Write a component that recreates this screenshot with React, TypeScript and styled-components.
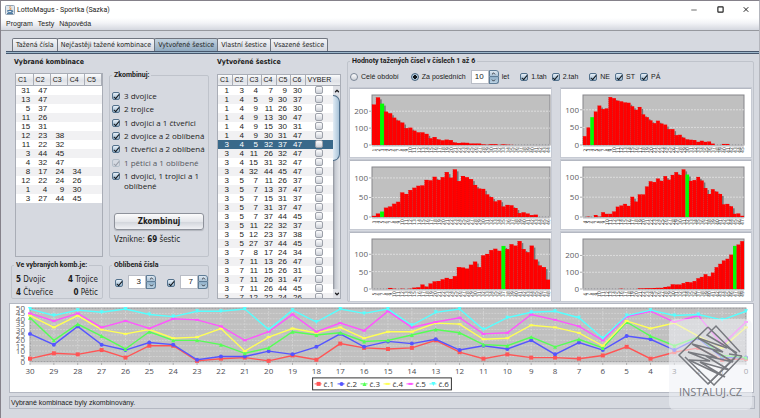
import React from "react";
import styled, { createGlobalStyle, css } from "styled-components";
import { ChevronUp, ChevronDown, Minus, Square, X } from "lucide-react";

const ui = `"DejaVu Sans Condensed", "DejaVu Sans", sans-serif`;
const plain = `"Liberation Sans", Arial, sans-serif`;
const narrow = `Roboto, "Liberation Sans", sans-serif`;
const body = `"Open Sans", "Noto Sans", sans-serif`;

const GlobalStyle = createGlobalStyle`
  *, *::before, *::after { box-sizing: border-box; }
  body { margin: 0; background: #d6d9e0; }
  button, input { font: inherit; color: inherit; margin: 0; padding: 0; }
`;

const Window = styled.div`
  position: relative;
  display: flex;
  flex-direction: column;
  min-height: 100vh;
  background: #d6d9e0;
  border: 1px solid #85818a;
  border-right-color: #b4b6bd;
  color: #1c1c20;
  font: 8px/10px ${ui};
`;

const TitleBar = styled.header`
  display: flex;
  align-items: center;
  gap: 2px;
  height: 17px;
  padding: 0 9px 0 4px;
  background: #fff;
  font: 7px/10px ${narrow};
`;

const TitleText = styled.span`
  flex: 1;
`;

const CaptionButton = styled.button`
  display: flex;
  align-items: center;
  justify-content: center;
  width: 8px;
  height: 10px;
  margin-left: 16px;
  border: 0;
  background: none;
  color: #222;
`;

const MenuBar = styled.nav`
  display: flex;
  align-items: center;
  gap: 5px;
  height: 13px;
  padding: 0 5px;
  background: linear-gradient(#fff, #f3f4f7 40%, #d4d7df);
  border-bottom: 1px solid #96989e;
  font: 7px/10px ${plain};
`;

const MenuItem = styled.button`
  border: 0;
  background: none;
  line-height: 10px;
`;

const TabStrip = styled.div`
  display: flex;
  height: 20px;
  padding: 7px 11px 0;
`;

const Tab = styled.button<{ $active?: boolean }>`
  height: 13px;
  margin-right: -1px;
  padding: 0 3px;
  border: 1px solid #70757f;
  border-bottom: 0;
  border-radius: 2px 2px 0 0;
  background: ${(p) =>
    p.$active
      ? "linear-gradient(#c3d2df, #8fa9c0)"
      : "linear-gradient(#f4f5f8, #d4d7df)"};
  font: 7px/10px ${ui};
  white-space: nowrap;
`;

const TabRule = styled.div`
  height: 3px;
  margin-left: 5px;
  background: #9db7cb;
  border-top: 1px solid #46566c;
  border-bottom: 1px solid #46566c;
`;

const Body = styled.main`
  display: grid;
  grid-template-columns: 198px 124px minmax(0, 1fr);
  padding: 3px 5px 0 10px;
`;

const Left = styled.section`
  display: grid;
  grid-template-columns: 92px 100px;
  grid-template-rows: 10px 186px 38px;
  column-gap: 6px;
  row-gap: 4px;
`;

const Heading = styled.h2`
  margin: 0;
  font: bold 7px/10px ${ui};
  white-space: nowrap;
`;

const LeftHeading = styled(Heading)`
  grid-column: 1 / 3;
  padding-left: 3px;
`;

const PickedPane = styled.div`
  margin: 2px 0 0 4px;
  border: 1px solid #a9adb6;
`;

const NumberTable = styled.table`
  width: 100%;
  border-collapse: collapse;
  table-layout: fixed;
  font: 8px/9px ${plain};

  th {
    height: 11px;
    padding: 0 0 0 2px;
    background: linear-gradient(#fafbfc, #dfe1e6 60%, #eceef1);
    border-right: 1px solid #a9adb6;
    border-bottom: 1px solid #a9adb6;
    font-size: 7px;
    font-weight: normal;
    text-align: left;
  }
  td {
    height: 9px;
    padding: 0 3px 0 0;
    text-align: right;
  }
`;

const Row = styled.tr<{ $selected?: boolean }>`
  background: #fff;
  &:nth-child(even) { background: #f1f1f3; }
  ${(p) =>
    p.$selected &&
    css`
      background: #39698a;
      color: #fff;
    `}
`;

const Group = styled.fieldset`
  min-width: 0;
  margin: 0;
  padding: 0 4px;
  border: 1px solid #bfc3cb;
  border-radius: 2px;
`;

const Legend = styled.legend`
  margin-left: -2px;
  padding: 0 2px;
  font: bold 7px/9px ${narrow};
  white-space: nowrap;
`;

const OptionList = styled.div`
  display: flex;
  flex-direction: column;
  justify-content: space-between;
  height: 100px;
  margin-top: 11px;
`;

const Option = styled.label<{ $dim?: boolean }>`
  display: flex;
  gap: 4px;
  margin: 0 -3px 0 -2px;
  font: 8px/10px ${body};
  color: ${(p) => (p.$dim ? "#55585f" : "inherit")};
`;

const Check = styled.input.attrs({ type: "checkbox" })`
  appearance: none;
  display: inline-flex;
  align-items: center;
  justify-content: center;
  flex: none;
  width: 8px;
  height: 8px;
  margin-top: 1px;
  border: 1px solid #7c8797;
  border-radius: 2px;
  background: linear-gradient(#fdfdfe, #cdd1d8);

  &:checked {
    border-color: #53718c;
    background: linear-gradient(#e6eff7, #96b4cd);
  }
  &:checked::before {
    content: "";
    width: 3px;
    height: 6px;
    border: solid #101418;
    border-width: 0 1px 1px 0;
    transform: rotate(40deg);
  }
  &:disabled { border-color: #b4bfca; background: #d5dae2; }
  &:disabled::before { border-color: #9a9ea8; }
`;

const Radio = styled.input.attrs({ type: "radio" })`
  appearance: none;
  width: 8px;
  height: 8px;
  border: 1px solid #7c8797;
  border-radius: 50%;
  background: linear-gradient(#fdfdfe, #cdd1d8);
  &:checked {
    border-color: #45627c;
    background: radial-gradient(#101418 0 2px, #b5cbdd 2px);
  }
`;

const CombineButton = styled.button`
  display: block;
  width: 100%;
  height: 17px;
  margin-top: 22px;
  border: 1px solid #8e929b;
  border-radius: 3px;
  background: linear-gradient(#fbfbfc, #e4e6ea 50%, #d3d6dc 55%, #f0f1f4);
  box-shadow: 0 1px 1px #b2b5bd;
  font: bold 8px/12px ${ui};
`;

const Result = styled.p`
  margin: 5px 0 0;
`;

const Tally = styled.div`
  display: flex;
  justify-content: space-between;
  margin-bottom: 3px;
`;

const TallyGroup = styled(Group)`
  padding-top: 5px;
`;

const FavouriteRow = styled.div`
  display: flex;
  align-items: center;
  justify-content: space-between;
  margin-right: -4px;
  padding: 5px 0 0 1px;
`;

const Inline = styled.label`
  display: flex;
  align-items: center;
  gap: 5px;
  white-space: nowrap;
`;

const SpinBox = styled.span`
  display: grid;
  grid-template: 1fr 1fr / 18px 10px;
  width: 28px;
  height: 14px;
`;

const SpinInput = styled.input`
  grid-row: 1 / 3;
  width: 18px;
  min-width: 0;
  padding-right: 4px;
  border: 1px solid #b9bdc6;
  background: #fff;
  text-align: right;
  font: 8px/10px ${plain};
`;

const SpinButton = styled.button`
  display: flex;
  align-items: center;
  justify-content: center;
  border: 1px solid #5f7d97;
  border-radius: 0 3px 0 0;
  background: linear-gradient(#dfe9f2, #a9c1d5);
  & + & {
    border-top: 0;
    border-radius: 0 0 3px 0;
    background: linear-gradient(#8fafc8, #bcd2e3);
  }
`;

const Middle = styled.section`
  margin-left: 8px;
  margin-right: -8px;
`;

const ScrollPane = styled.div`
  display: flex;
  height: 225px;
  margin-top: 7px;
  border: 1px solid #a9adb6;
  overflow: hidden;
  background: #fff;
`;

const TicketTable = styled(NumberTable)`
  flex: none;
  width: 115px;
  align-self: flex-start;

  th { height: 10px; white-space: nowrap; }
  th:last-child { border-right: 0; }
  td:last-child { padding: 0; text-align: center; line-height: 0; }
`;

const RowCheck = styled(Check)`
  margin: 0;
  border-color: #9da1aa;
`;

const ScrollColumn = styled.div`
  flex: 1;
  display: flex;
  flex-direction: column;
  background: linear-gradient(90deg, #8b8f98, #c6cad2 30%, #e4e6ea);
`;

const ScrollHead = styled.div`
  height: 11px;
  background: linear-gradient(#fafbfc, #dfe1e6 60%, #eceef1);
  border-bottom: 1px solid #a9adb6;
`;

const ScrollArrow = styled.button`
  display: flex;
  align-items: center;
  justify-content: center;
  height: 9px;
  border: 0;
  background: #dfe1e6;
`;

const ScrollThumb = styled.div`
  height: 66px;
  border: 1px solid #4f6f8c;
  border-left: 0;
  border-radius: 0 7px 7px 0;
  background: linear-gradient(90deg, #e1ecf5, #a9c3d8);
`;

const ScrollTrack = styled.div`
  flex: 1;
`;

const ChartGroup = styled(Group)`
  margin-left: 14px;
  padding: 0 2px;

  ${Legend} { margin-left: 0; }
`;

const Filters = styled.div`
  display: flex;
  align-items: center;
  height: 16px;
  margin: 3px 0 3px 0;
  font: 7px/10px ${plain};
  ${Check} { margin-top: 0; }
`;

const Filter = styled(Inline)<{ $gap?: number }>`
  gap: 3px;
  margin-right: ${(p) => p.$gap ?? 5}px;
`;

const ChartGrid = styled.div`
  display: grid;
  grid-template-columns: 201fr 190fr;
  column-gap: 10px;
  row-gap: 3px;
`;

const ChartPanel = styled.div`
  height: 69px;
  background: #fff;
  border-top: 1px solid #b4b8c2;
  box-shadow: 0 0 0 1px #c6cad3;
  overflow: hidden;
`;

const Drawing = styled.svg`
  display: block;
  width: 100%;
  height: auto;
`;

const TrendPanel = styled.section`
  margin: 1px 5px 0 8px;
  background: #fff;
  border: 1px solid #b4b8c2;
`;

const StatusBar = styled.footer`
  margin: 3px 4px 9px 8px;
  padding: 0 1px;
  border: 1px solid #b4b8c2;
  font: 7px/11px ${plain};
`;

const Watermark = styled.div`
  position: absolute;
  right: 7px;
  bottom: 8px;
  display: flex;
  flex-direction: column;
  align-items: center;
  width: 83px;
  height: 91px;
  padding-top: 5px;
  border-radius: 6px;
  background: rgba(238, 240, 246, 0.55);
  color: #77797f;
  font: 11px/12px "Open Sans", sans-serif;
`;

const picked = [
  [31, 47], [13, 47], [5, 37], [11, 26], [15, 31], [12, 23, 38], [11, 22, 32],
  [3, 44, 45], [4, 32, 47], [8, 17, 24, 34], [12, 22, 24, 26], [1, 4, 9, 30],
  [3, 27, 44, 45],
];

const tickets = [
  [1, 3, 4, 7, 9, 30], [1, 4, 5, 9, 30, 37], [1, 4, 9, 11, 26, 30],
  [1, 4, 9, 13, 30, 47], [1, 4, 9, 15, 30, 31], [1, 4, 9, 30, 31, 47],
  [3, 4, 5, 32, 37, 47], [3, 4, 11, 26, 32, 47], [3, 4, 15, 31, 32, 47],
  [3, 4, 32, 44, 45, 47], [3, 5, 7, 11, 26, 37], [3, 5, 7, 13, 37, 47],
  [3, 5, 7, 15, 31, 37], [3, 5, 7, 31, 37, 47], [3, 5, 7, 37, 44, 45],
  [3, 5, 11, 22, 32, 37], [3, 5, 12, 23, 37, 38], [3, 5, 27, 37, 44, 45],
  [3, 7, 8, 17, 24, 34], [3, 7, 11, 13, 26, 47], [3, 7, 11, 15, 26, 31],
  [3, 7, 11, 26, 31, 47], [3, 7, 11, 26, 44, 45], [3, 7, 12, 22, 24, 26],
];

type Histogram = { values: number[]; hit: number; max: number; step: number };

const histograms: Histogram[] = [
  { hit: 2, max: 296, step: 100, values: [240, 282, 245, 198, 188, 162, 145, 133, 100, 103, 85, 75, 75, 66, 40, 47, 33, 28, 32, 29, 15, 12, 14, 13, 9, 9, 9, 4, 2, 5, 5, 1, 4, 2, 1, 0, 0, 0, 0, 0, 0, 0, 0, 0] },
  { hit: 2, max: 142, step: 50, values: [25, 50, 79, 95, 112, 102, 104, 136, 133, 126, 124, 121, 120, 110, 100, 108, 87, 79, 70, 62, 69, 61, 58, 45, 45, 28, 29, 21, 16, 15, 14, 9, 12, 9, 10, 4, 0, 0, 3, 3, 0, 0, 0, 0] },
  { hit: 2, max: 128, step: 50, values: [3, 9, 14, 24, 27, 34, 39, 63, 59, 69, 75, 80, 81, 95, 94, 103, 95, 102, 115, 101, 122, 92, 105, 102, 97, 82, 73, 72, 58, 51, 40, 43, 27, 31, 30, 23, 10, 12, 9, 5, 6, 0, 0, 0] },
  { hit: 28, max: 126, step: 50, values: [0, 1, 0, 5, 1, 12, 8, 8, 14, 26, 29, 33, 28, 51, 39, 57, 57, 77, 90, 88, 97, 91, 103, 94, 106, 113, 106, 120, 107, 91, 93, 101, 92, 73, 58, 70, 64, 58, 32, 33, 27, 8, 9, 3] },
  { hit: 32, max: 144, step: 50, values: [0, 0, 0, 0, 3, 1, 0, 1, 0, 1, 4, 5, 13, 7, 16, 22, 23, 28, 32, 29, 37, 63, 62, 59, 70, 79, 63, 97, 101, 112, 116, 110, 124, 115, 129, 125, 138, 115, 106, 125, 85, 68, 63, 27] },
  { hit: 41, max: 298, step: 100, values: [0, 0, 0, 0, 0, 0, 0, 0, 0, 0, 2, 0, 0, 0, 0, 4, 4, 5, 5, 6, 7, 7, 12, 15, 28, 27, 27, 35, 42, 40, 47, 64, 72, 88, 76, 98, 130, 150, 170, 180, 205, 257, 265, 285] },
];

function HistogramChart({ data, index }: { data: Histogram; index: number }) {
  const wide = index % 2 === 0;
  const width = wide ? 201 : 190;
  const x0 = 22;
  const plotW = wide ? 178 : 161;
  const y0 = 6;
  const plotH = 50;
  const base = y0 + plotH;
  const bw = plotW / data.values.length;
  const h = (v: number) => (v / data.max) * plotH;
  const ticks: number[] = [];
  for (let t = 0; t < data.max; t += data.step) ticks.push(t);
  return (
    <ChartPanel>
      <Drawing viewBox={`0 0 ${width} 68`} role="img" aria-label={`Četnost čísla č.${index + 1}`}>
        <rect x={x0} y={y0} width={plotW} height={plotH} fill="#c0c0c0" stroke="#85858a" />
        {ticks.map((t) => (
          <g key={t}>
            <line x1={x0} x2={x0 + plotW} y1={base - h(t)} y2={base - h(t)} stroke="#e8e8e8" strokeWidth="0.7" strokeDasharray="2 1" />
            <line x1={x0 - 3} x2={x0 - 1} y1={base - h(t)} y2={base - h(t)} stroke="#888" strokeWidth="0.7" />
            <text x={x0 - 4} y={base - h(t) + 3} textAnchor="end" fontSize="8" fill="#5c5c62" fontFamily={body}>{t}</text>
          </g>
        ))}
        {data.values.map((v, i) =>
          v > 10 && i < data.values.length - 1 ? (
            <rect key={i} x={x0 + (i + 1) * bw} y={base - h(v) + 2} width="1.6" height={Math.max(0, h(v) - 2)} fill="#757575" />
          ) : null
        )}
        {data.values.map((v, i) => (
          <g key={i}>
            <rect x={x0 + i * bw} y={base - h(v)} width={bw} height={h(v)} fill={i === data.hit ? "#00ff00" : "#ff0000"} />
            {i !== data.hit && v > 0 && (
              <line x1={x0 + i * bw} x2={x0 + i * bw} y1={base - h(v)} y2={base} stroke="#b80f0f" strokeWidth="0.4" strokeDasharray="1 1" />
            )}
            <text transform={`translate(${x0 + (i + 0.5) * bw + 2} ${base + 8}) rotate(-90)`} textAnchor="middle" x="3" fontSize="5" fill="#3c3c40" fontFamily={ui}>
              {i + index + 1}
            </text>
          </g>
        ))}
        <line x1={x0} x2={x0 + plotW} y1={base + 1} y2={base + 1} stroke="#99999d" strokeWidth="0.7" />
      </Drawing>
    </ChartPanel>
  );
}

type Shape = "square" | "circle" | "up" | "down" | "diamond" | "bar";
type Series = { name: string; color: string; shape: Shape; values: number[] };

const series: Series[] = [
  { name: "č.1", color: "#ff5555", shape: "square", values: [3, 8, 7, 11, 4, 15, 15, 1, 3, 4, 1, 6, 2, 17, 13, 12, 13, 20, 9, 3, 7, 4, 4, 3, 6, 14, 3, 9, 13, 2, 3] },
  { name: "č.2", color: "#5555ff", shape: "circle", values: [26, 16, 33, 16, 11, 18, 16, 2, 5, 5, 10, 7, 14, 26, 14, 19, 17, 21, 11, 15, 12, 20, 7, 18, 11, 24, 21, 11, 22, 4, 4] },
  { name: "č.3", color: "#55ff55", shape: "up", values: [41, 20, 35, 24, 12, 28, 20, 20, 16, 8, 13, 28, 25, 27, 19, 20, 25, 30, 27, 16, 15, 23, 14, 21, 13, 37, 24, 15, 23, 6, 4] },
  { name: "č.4", color: "#ffff55", shape: "diamond", values: [43, 32, 43, 30, 26, 30, 22, 23, 31, 10, 23, 31, 27, 32, 22, 28, 28, 36, 35, 21, 22, 34, 32, 27, 15, 38, 31, 36, 24, 13, 32] },
  { name: "č.5", color: "#ff55ff", shape: "bar", values: [45, 38, 45, 32, 38, 31, 40, 39, 33, 20, 28, 44, 28, 36, 29, 47, 32, 37, 41, 26, 27, 44, 39, 33, 20, 42, 47, 37, 43, 16, 37] },
  { name: "č.6", color: "#55ffff", shape: "down", values: [49, 43, 48, 46, 49, 44, 42, 47, 47, 49, 30, 48, 37, 49, 45, 49, 34, 46, 49, 30, 41, 46, 47, 41, 22, 43, 48, 43, 44, 39, 47] },
];

function Marker({ x, y, shape, color }: { x: number; y: number; shape: Shape; color: string }) {
  const d: Record<Shape, string> = {
    square: "M-2-2H2V2H-2Z",
    circle: "M-2 0A2 2 0 1 0 2 0A2 2 0 1 0-2 0Z",
    up: "M0-2L2 2H-2Z",
    down: "M0 2L2-2H-2Z",
    diamond: "M-2-1H2V1H-2Z",
    bar: "M-2-1H2V1H-2Z",
  };
  return <path d={d[shape]} transform={`translate(${x} ${y})`} fill={color} />;
}

function TrendChart() {
  const x0 = 20;
  const w = 717;
  const y0 = 4;
  const h = 54;
  const px = (i: number) => x0 + (i * w) / 30;
  const py = (v: number) => y0 + h - (v * h) / 50;
  return (
    <TrendPanel>
      <Drawing viewBox="0 0 744 88" role="img" aria-label="Vývoj tažených čísel">
        <rect x={x0} y={y0} width={w} height={h} fill="#c0c0c0" stroke="#77777b" strokeWidth="0.8" />
        {Array.from({ length: 11 }, (_, i) => i * 5).map((v) => (
          <g key={v}>
            <line x1={x0} x2={x0 + w} y1={py(v)} y2={py(v)} stroke="#dcdcdc" strokeWidth="0.6" strokeDasharray="2 1" />
            <text x={x0 - 5} y={py(v) + 3} textAnchor="end" fontSize="8" fill="#5c5c62" fontFamily={body}>{v}</text>
          </g>
        ))}
        {Array.from({ length: 31 }, (_, i) => (
          <g key={i}>
            <line x1={px(i)} x2={px(i)} y1={y0} y2={y0 + h} stroke="#dcdcdc" strokeWidth="0.6" strokeDasharray="2 1" />
            <line x1={px(i)} x2={px(i)} y1={y0 + h + 1} y2={y0 + h + 3} stroke="#888" strokeWidth="0.7" />
            <text x={px(i)} y={y0 + h + 12} textAnchor="middle" fontSize="8" fill="#4c4c52" fontFamily={body}>{30 - i}</text>
          </g>
        ))}
        <line x1={x0} x2={x0 + w} y1={y0 + h + 2} y2={y0 + h + 2} stroke="#aaa" strokeWidth="0.7" />
        {series.map((s) => (
          <g key={s.name}>
            <polyline points={s.values.map((v, i) => `${px(i)},${py(v)}`).join(" ")} fill="none" stroke={s.color} strokeWidth="1.4" />
            {s.values.map((v, i) => <Marker key={i} x={px(i)} y={py(v)} shape={s.shape} color={s.color} />)}
          </g>
        ))}
        <rect x="303" y="74" width="139" height="12" fill="#fff" stroke="#333" />
        {series.map((s, i) => (
          <g key={s.name}>
            <line x1={305 + i * 23} x2={312 + i * 23} y1="80" y2="80" stroke={s.color} />
            <Marker x={309 + i * 23} y={80} shape={s.shape} color={s.color} />
            <text x={314 + i * 23} y="83" fontSize="8" fill="#333" fontFamily={body}>{s.name}</text>
          </g>
        ))}
      </Drawing>
    </TrendPanel>
  );
}

function Spinner({ value, label }: { value: number; label: string }) {
  return (
    <SpinBox>
      <SpinInput defaultValue={value} aria-label={label} />
      <SpinButton aria-label="Zvýšit"><ChevronUp size={5} strokeWidth={4} /></SpinButton>
      <SpinButton aria-label="Snížit"><ChevronDown size={5} strokeWidth={4} /></SpinButton>
    </SpinBox>
  );
}

function JavaIcon() {
  return (
    <svg width="10" height="10" viewBox="0 0 10 10" aria-hidden="true">
      <rect x=".5" y=".5" width="9" height="9" rx="1" fill="#dfe7ee" stroke="#94a3b3" />
      <path d="M5.4 1C3.7 2.6 6.2 3 4.7 5M6.3 2.8C5.3 3.6 6.2 4 5.6 5" fill="none" stroke="#e08a3c" strokeWidth=".9" />
      <path d="M2.6 5.5H6.8V7.6H3.2ZM6.8 5.8H7.8V6.8H6.8M2 8.5H8" fill="none" stroke="#3f6f9a" strokeWidth=".9" />
    </svg>
  );
}

function InstalujLogo() {
  return (
    <svg width="68" height="62" viewBox="0 0 68 62" fill="none" stroke="#787a80" strokeWidth="1.5" aria-hidden="true">
      <path d="M63 28L39 2L30 11L60 29" />
      <path d="M31 3L2 31L31 60L60 31" />
      <path d="M31 3L60 31M65 32L37 61L8 33M65 32L52 30" />
      <path d="M21 14L46 28L15 20L40 34L11 28L33 37L12 36L48 53L23 38L52 46L29 32L56 38L36 26" strokeWidth="1.7" />
      <path d="M21 14L50 24M31 60L58 34" />
    </svg>
  );
}

const options = [
  "3 dvojice", "2 trojice", "1 dvojici a 1 čtveřici", "2 dvojice a 2 oblíbená",
  "1 čtveřici a 2 oblíbená", "1 pětici a 1 oblíbené", "1 dvojici, 1 trojici a 1 oblíbené",
];

const tabs = ["Tažená čísla", "Nejčastěji tažené kombinace", "Vytvořené šestice", "Vlastní šestice", "Vsazené šestice"];

export default function App() {
  return (
    <Window>
      <GlobalStyle />
      <TitleBar>
        <JavaIcon />
        <TitleText>LottoMagus - Sportka (Sazka)</TitleText>
        <CaptionButton aria-label="Minimalizovat"><Minus size={8} /></CaptionButton>
        <CaptionButton aria-label="Maximalizovat"><Square size={7} strokeWidth={4} /></CaptionButton>
        <CaptionButton aria-label="Zavřít"><X size={9} strokeWidth={3} /></CaptionButton>
      </TitleBar>
      <MenuBar>
        <MenuItem>Program</MenuItem>
        <MenuItem>Testy</MenuItem>
        <MenuItem>Nápověda</MenuItem>
      </MenuBar>
      <TabStrip role="tablist">
        {tabs.map((t, i) => (
          <Tab key={t} role="tab" aria-selected={i === 2} $active={i === 2}>{t}</Tab>
        ))}
      </TabStrip>
      <TabRule />
      <Body>
        <Left>
          <LeftHeading>Vybrané kombinace</LeftHeading>
          <PickedPane>
            <NumberTable>
              <thead>
                <tr>{[1, 2, 3, 4, 5].map((n) => <th key={n}>C{n}</th>)}</tr>
              </thead>
              <tbody>
                {picked.map((r, i) => (
                  <Row key={i}>{[0, 1, 2, 3, 4].map((c) => <td key={c}>{r[c]}</td>)}</Row>
                ))}
              </tbody>
            </NumberTable>
          </PickedPane>
          <Group>
            <Legend>Zkombinuj:</Legend>
            <OptionList>
              {options.map((o, i) => (
                <Option key={o} $dim={i === 5}>
                  <Check defaultChecked disabled={i === 5} />
                  <span>{o}</span>
                </Option>
              ))}
            </OptionList>
            <CombineButton>Zkombinuj</CombineButton>
            <Result>Vznikne: <b>69</b> šestic</Result>
          </Group>
          <TallyGroup>
            <Legend>Ve vybraných komb.je:</Legend>
            <Tally><span><b>5</b> Dvojic</span><span><b>4</b> Trojice</span></Tally>
            <Tally><span><b>4</b> Čtveřice</span><span><b>0</b> Pětic</span></Tally>
          </TallyGroup>
          <Group>
            <Legend>Oblíbená čísla</Legend>
            <FavouriteRow>
              <Inline><Check defaultChecked aria-label="První oblíbené" /><Spinner value={3} label="První číslo" /></Inline>
              <Inline><Check defaultChecked aria-label="Druhé oblíbené" /><Spinner value={7} label="Druhé číslo" /></Inline>
            </FavouriteRow>
          </Group>
        </Left>
        <Middle>
          <Heading>Vytvořené šestice</Heading>
          <ScrollPane>
            <TicketTable>
              <colgroup>
                {[0, 1, 2, 3, 4, 5].map((c) => <col key={c} width={c % 2 ? 15 : 14} />)}
                <col />
              </colgroup>
              <thead>
                <tr>
                  {[1, 2, 3, 4, 5, 6].map((n) => <th key={n}>C{n}</th>)}
                  <th>VYBER</th>
                </tr>
              </thead>
              <tbody>
                {tickets.map((r, i) => (
                  <Row key={i} $selected={i === 6}>
                    {r.map((n, c) => <td key={c}>{n}</td>)}
                    <td><RowCheck aria-label={`Vybrat šestici ${i + 1}`} /></td>
                  </Row>
                ))}
              </tbody>
            </TicketTable>
            <ScrollColumn>
              <ScrollHead />
              <ScrollArrow aria-label="Nahoru"><ChevronUp size={6} strokeWidth={5} /></ScrollArrow>
              <ScrollThumb />
              <ScrollTrack />
              <ScrollArrow aria-label="Dolů"><ChevronDown size={6} strokeWidth={5} /></ScrollArrow>
            </ScrollColumn>
          </ScrollPane>
        </Middle>
        <ChartGroup>
          <Legend>Hodnoty tažených čísel v číslech 1 až 6</Legend>
          <Filters>
            <Filter $gap={12}><Radio name="period" />Celé období</Filter>
            <Filter><Radio name="period" defaultChecked />Za posledních</Filter>
            <Filter $gap={11}><Spinner value={10} label="Počet let" />let</Filter>
            <Filter><Check defaultChecked />1.tah</Filter>
            <Filter $gap={11}><Check defaultChecked />2.tah</Filter>
            <Filter><Check defaultChecked />NE</Filter>
            <Filter><Check defaultChecked />ST</Filter>
            <Filter><Check defaultChecked />PÁ</Filter>
          </Filters>
          <ChartGrid>
            {histograms.map((d, i) => <HistogramChart key={i} data={d} index={i} />)}
          </ChartGrid>
        </ChartGroup>
      </Body>
      <TrendChart />
      <StatusBar>Vybrané kombinace byly zkombinovány.</StatusBar>
      <Watermark>
        <InstalujLogo />
        <span>INSTALUJ.CZ</span>
      </Watermark>
    </Window>
  );
}
